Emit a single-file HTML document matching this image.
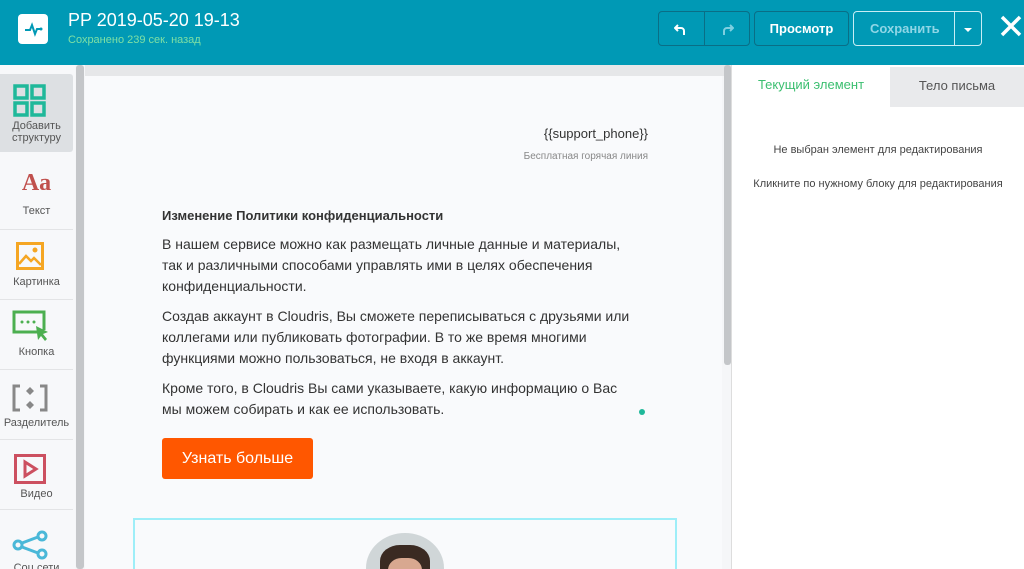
<!DOCTYPE html>
<html style="overflow:hidden;width:1024px;height:569px"><head><meta charset="utf-8"><style>
*{margin:0;padding:0;box-sizing:border-box}
body{width:1024px;height:569px;overflow:hidden;background:#f5f6f8;font-family:"Liberation Sans","DejaVu Sans",sans-serif;position:relative}
#w{position:absolute;left:0;top:0;width:1024px;height:569px;overflow:hidden}
.hdr{position:absolute;left:0;top:0;width:1024px;height:65px;background:#0099b5}
.logo{position:absolute;left:18px;top:14px;width:30px;height:30px;background:#fff;border-radius:4px}
.title{position:absolute;left:68px;top:10px;color:#fff;font-size:18px}
.sub{position:absolute;left:68px;top:34px;color:#7fe0a4;font-size:11px}
.btn{position:absolute;top:11px;height:35px;border:1px solid #0a6e86;border-radius:4px;color:#fff;font-size:13px;font-weight:bold;display:flex;align-items:center;justify-content:center}
.side{position:absolute;left:0;top:65px;width:75px;height:504px;background:#f7f8fa;overflow:hidden}
.it{position:absolute;left:0;width:73px;height:70px;text-align:center;font-size:11px;color:#555;border-bottom:1px solid #e3e4e6}
.it span{position:absolute;left:0;right:0}
.canvas{position:absolute;left:85px;top:76px;width:637px;height:493px;background:#f9fafc}
.txt{position:absolute;left:162px;width:478px;font-size:14px;line-height:21px;color:#333}
.right{position:absolute;left:732px;top:65px;width:292px;height:504px;background:#fff}
</style></head><body><div id="w">
<div class="hdr">
<div class="logo"><svg width="30" height="30"><path d="M7 16h5l2-5 3 9 2-5h4" stroke="#0099b5" stroke-width="2" fill="none"/><circle cx="23" cy="15" r="1.5" fill="#0099b5"/></svg></div>
<div class="title">PP 2019-05-20 19-13</div>
<div class="sub">Сохранено 239 сек. назад</div>
<div class="btn" style="left:658px;width:92px;"><div style="position:absolute;left:45px;top:0;bottom:0;border-left:1px solid #0a6e86"></div>
<svg style="position:absolute;left:15px;top:10px" width="14" height="14"><path d="M4 3L1 6l3 3M1 6h6a3 3 0 0 1 3 3v4" stroke="#fff" stroke-width="2" fill="none"/></svg>
<svg style="position:absolute;left:61px;top:10px" width="14" height="14"><path d="M10 3l3 3-3 3M13 6H7a3 3 0 0 0-3 3v4" stroke="#7fcfe0" stroke-width="2" fill="none"/></svg></div>
<div class="btn" style="left:754px;width:95px;">Просмотр</div>
<div class="btn" style="left:853px;width:129px;border-color:#c8eef5;color:#8fd6e6;justify-content:flex-start;padding-left:16px">Сохранить<div style="position:absolute;left:100px;top:0;bottom:0;border-left:1px solid #c8eef5"></div><div style="position:absolute;left:110px;top:16px;border:4px solid transparent;border-top-color:#fff"></div></div>
<svg style="position:absolute;left:1000px;top:15px" width="22" height="22"><path d="M2 2L20 20M20 2L2 20" stroke="#fff" stroke-width="3.5"/></svg>
</div>
<div class="side">
<div class="it" style="top:9px;background:#dde0e3;border-radius:0 3px 3px 0;height:78px;border:none">
<svg style="position:absolute;left:13px;top:10px" width="33" height="33"><g fill="none" stroke="#1fb89a" stroke-width="3.5"><rect x="2" y="2" width="12" height="12"/><rect x="19" y="2" width="12" height="12"/><rect x="2" y="19" width="12" height="12"/><rect x="19" y="19" width="12" height="12"/></g></svg>
<span style="top:46px;line-height:12px">Добавить структуру</span></div>
<div class="it" style="top:95px"><span style="top:10px;font:bold 24px 'Liberation Serif',serif;color:#c0504d">Aa</span><span style="top:45px">Текст</span></div>
<div class="it" style="top:165px"><svg style="position:absolute;left:16px;top:12px" width="28" height="28"><rect x="1.5" y="1.5" width="25" height="25" fill="none" stroke="#f5a623" stroke-width="3"/><path d="M3 22l7-8 5 5 3-3 7 7" stroke="#f5a623" stroke-width="2.5" fill="none"/><circle cx="19" cy="8" r="2.5" fill="#f5a623"/></svg><span style="top:46px">Картинка</span></div>
<div class="it" style="top:235px"><svg style="position:absolute;left:12px;top:10px" width="38" height="34"><path d="M26 22H2V2h30v18" stroke="#4caf50" stroke-width="3" fill="none"/><circle cx="10" cy="12" r="1.5" fill="#4caf50"/><circle cx="16" cy="12" r="1.5" fill="#4caf50"/><circle cx="22" cy="12" r="1.5" fill="#4caf50"/><path d="M24 16l12 6-5 2 4 5-2 2-4-5-3 4z" fill="#4caf50"/></svg><span style="top:46px">Кнопка</span></div>
<div class="it" style="top:305px"><svg style="position:absolute;left:12px;top:14px" width="36" height="28"><path d="M8 2H2v24h6M28 2h6v24h-6" stroke="#888" stroke-width="3" fill="none"/><path d="M18 3l4 4-4 4-4-4zM18 17l4 4-4 4-4-4z" fill="#888"/></svg><span style="top:47px">Разделитель</span></div>
<div class="it" style="top:375px"><svg style="position:absolute;left:14px;top:14px" width="32" height="30"><rect x="1.5" y="1.5" width="29" height="27" fill="none" stroke="#cc5060" stroke-width="3"/><path d="M11 8l11 7-11 7z" fill="none" stroke="#cc5060" stroke-width="3"/></svg><span style="top:48px">Видео</span></div>
<div class="it" style="top:445px;height:59px;border:none"><svg style="position:absolute;left:11px;top:20px" width="38" height="30"><g stroke="#4ab8d8" stroke-width="3" fill="none"><circle cx="31" cy="6" r="4"/><circle cx="7" cy="15" r="4"/><circle cx="31" cy="24" r="4"/><path d="M11 13l16-6M11 17l16 6"/></g></svg><span style="top:52px">Соц.сети</span></div>
</div>
<div style="position:absolute;left:76px;top:65px;width:8px;height:504px;background:#c4c6c9;border-radius:3px"></div>
<div style="position:absolute;left:85px;top:65px;width:646px;height:11px;background:#e6e7e9"></div>
<div class="canvas"></div>
<div style="position:absolute;left:724px;top:65px;width:7px;height:300px;background:#c4c6c9;border-radius:3px"></div>
<div style="position:absolute;left:731px;top:65px;width:1px;height:504px;background:#ddd"></div>
<div style="position:absolute;right:376px;top:126px;font-size:13px;color:#333">{{support_phone}}</div>
<div style="position:absolute;right:376px;top:151px;font-size:10px;color:#888">Бесплатная горячая линия</div>
<div class="txt" style="top:205px;font-size:13px;font-weight:bold">Изменение Политики конфиденциальности</div>
<div class="txt" style="top:234px">В нашем сервисе можно как размещать личные данные и материалы, так и различными способами управлять ими в целях обеспечения конфиденциальности.</div>
<div class="txt" style="top:306px">Создав аккаунт в Cloudris, Вы сможете переписываться с друзьями или коллегами или публиковать фотографии. В то же время многими функциями можно пользоваться, не входя в аккаунт.</div>
<div class="txt" style="top:378px">Кроме того, в Cloudris Вы сами указываете, какую информацию о Вас мы можем собирать и как ее использовать.</div>
<div style="position:absolute;left:639px;top:409px;width:6px;height:6px;border-radius:50%;background:#1fb89a"></div>
<div style="position:absolute;left:162px;top:438px;width:151px;height:41px;background:#ff5700;border-radius:3px;color:#fff;font-size:16px;text-align:center;line-height:41px">Узнать больше</div>
<div style="position:absolute;left:133px;top:518px;width:544px;height:51px;border:2px solid #9eeef8;border-bottom:none;overflow:hidden">
<div style="position:absolute;left:231px;top:13px;width:78px;height:70px;border-radius:50%;background:#d0d6d8;overflow:hidden"><div style="position:absolute;left:14px;top:12px;width:50px;height:40px;border-radius:40%;background:#3a2a22"></div><div style="position:absolute;left:22px;top:25px;width:34px;height:30px;border-radius:40%;background:#d8a890"></div></div></div>
<div class="right">
<div style="position:absolute;left:0;top:0;width:158px;height:42px;font-size:13px;color:#3bbf70;text-align:center;line-height:40px">Текущий элемент</div>
<div style="position:absolute;left:158px;top:2px;width:134px;height:40px;background:#e9eaec;font-size:13px;color:#555;text-align:center;line-height:38px">Тело письма</div>
<div style="position:absolute;left:0;width:292px;top:79px;font-size:11px;color:#444;text-align:center">Не выбран элемент для редактирования</div>
<div style="position:absolute;left:0;width:292px;top:113px;font-size:11px;color:#444;text-align:center">Кликните по нужному блоку для редактирования</div>
</div>
</div></body></html>
